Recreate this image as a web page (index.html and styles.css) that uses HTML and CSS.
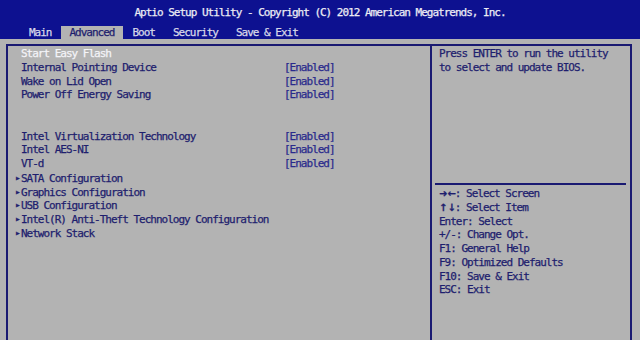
FILE: index.html
```html
<!DOCTYPE html>
<html>
<head>
  <title>Aptio Setup Utility</title>
  <link rel="stylesheet" href="styles.css">
</head>
<body>
  <div class="header">
    <div class="title">Aptio Setup Utility - Copyright (C) 2012 American Megatrends, Inc.</div>
    <div class="tabs">
      <span class="tab">Main</span>
      <span class="tab active">Advanced</span>
      <span class="tab">Boot</span>
      <span class="tab">Security</span>
      <span class="tab">Save &amp; Exit</span>
    </div>
  </div>

  <div class="frame">
    <div class="menu">
      <div class="row selected"><span class="label">Start Easy Flash</span></div>
      <div class="row"><span class="label">Internal Pointing Device</span><span class="value">[Enabled]</span></div>
      <div class="row"><span class="label">Wake on Lid Open</span><span class="value">[Enabled]</span></div>
      <div class="row"><span class="label">Power Off Energy Saving</span><span class="value">[Enabled]</span></div>
      <div class="row"></div>
      <div class="row"></div>
      <div class="row"><span class="label">Intel Virtualization Technology</span><span class="value">[Enabled]</span></div>
      <div class="row"><span class="label">Intel AES-NI</span><span class="value">[Enabled]</span></div>
      <div class="row"><span class="label">VT-d</span><span class="value">[Enabled]</span></div>
      <div class="row sub"><span class="label">SATA Configuration</span></div>
      <div class="row sub"><span class="label">Graphics Configuration</span></div>
      <div class="row sub"><span class="label">USB Configuration</span></div>
      <div class="row sub"><span class="label">Intel(R) Anti-Theft Technology Configuration</span></div>
      <div class="row sub"><span class="label">Network Stack</span></div>
    </div>

    <div class="help">
      <div class="help-text">
        <div class="line">Press ENTER to run the utility</div>
        <div class="line">to select and update BIOS.</div>
      </div>
      <div class="keys">
        <div class="line"><span class="arrows">&#10140;&#8592;</span>: Select Screen</div>
        <div class="line"><span class="arrows">&#8593;&#8595;</span>: Select Item</div>
        <div class="line">Enter: Select</div>
        <div class="line">+/-: Change Opt.</div>
        <div class="line">F1: General Help</div>
        <div class="line">F9: Optimized Defaults</div>
        <div class="line">F10: Save &amp; Exit</div>
        <div class="line">ESC: Exit</div>
      </div>
    </div>
  </div>
</body>
</html>
```

FILE: styles.css
```css
body {
  margin: 0;
  width: 640px;
  height: 340px;
  overflow: hidden;
  background: #b3b3b3;
  font-family: "DejaVu Sans Mono", "Liberation Mono", monospace;
  font-size: 11px;
  letter-spacing: -1px;
  color: #1e1e6e;
  -webkit-text-stroke: 0.25px;
}

.header {
  background: #0d1190;
  height: 39px;
}

.title {
  height: 26px;
  line-height: 26px;
  text-align: center;
  color: #ececf4;
}

.tabs {
  display: flex;
  height: 13px;
  line-height: 13px;
  padding-left: 20px;
}

.tab {
  padding: 0 9px;
  color: #d8d8e8;
}

.tab.active {
  background: #b3b3b3;
  color: #1e1e6e;
}

.frame {
  display: flex;
  height: 300px;
  margin: 5px 8px 0 6px;
  border: 2px solid #1a1a72;
  border-bottom: none;
}

.menu {
  width: 424px;
  padding: 1px 0 0 13px;
  box-sizing: border-box;
  border-right: 2px solid #1a1a72;
}

.row {
  display: flex;
  height: 13.75px;
  line-height: 13.75px;
}

.label {
  width: 263px;
  flex-shrink: 0;
}

.value {
  color: #2a2a8c;
}

.row.selected .label {
  color: #f4f4f8;
}

.row.sub .label::before {
  content: "\25B6";
  display: inline-block;
  width: 5px;
  margin-left: -5px;
  font-size: 6px;
  vertical-align: 2px;
  letter-spacing: 0;
}

.help {
  flex: 1;
  padding-top: 1px;
}

.line {
  height: 13.75px;
  line-height: 13.75px;
}

.help-text {
  height: 136px;
  padding-left: 7px;
}

.keys {
  margin: 0 4px 0 3px;
  padding: 2px 0 0 4px;
  border-top: 2px solid #1a1a72;
}

.arrows {
  font-family: "DejaVu Sans", sans-serif;
  font-weight: bold;
  letter-spacing: 0;
  font-size: 10px;
  margin-right: -1px;
}
```
